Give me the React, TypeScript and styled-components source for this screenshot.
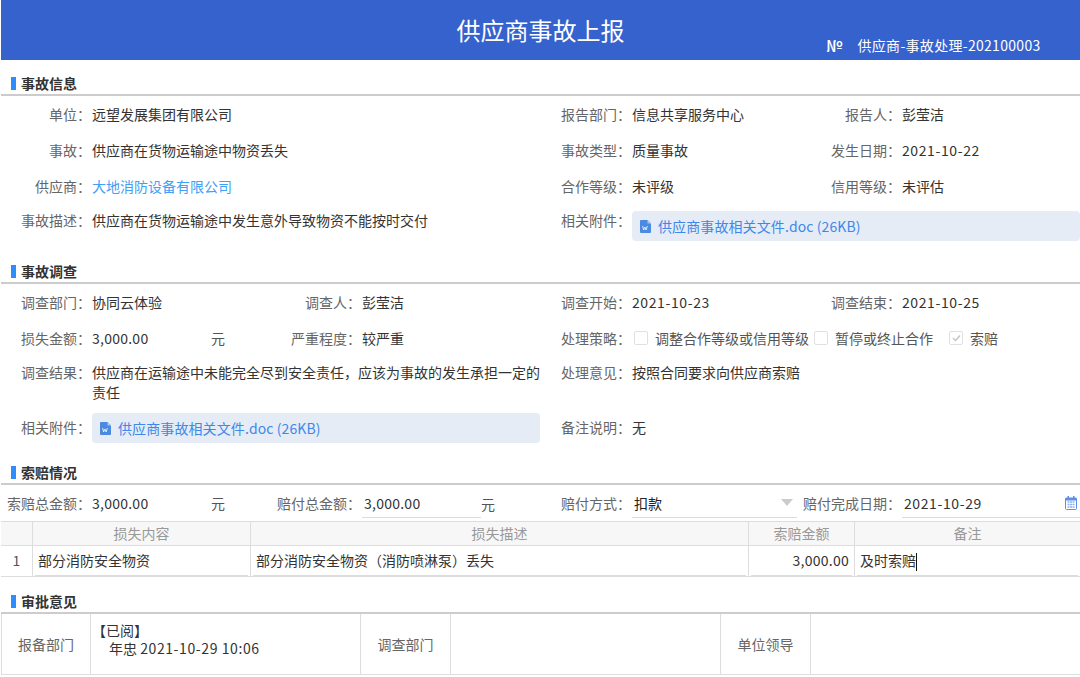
import type { ReactNode } from "react";
import styled, { createGlobalStyle } from "styled-components";

const GlobalStyle = createGlobalStyle`
  html, body {
    margin: 0;
    padding: 0;
    background: #fff;
  }
  body {
    font-family: "Noto Sans CJK SC", "Open Sans", sans-serif;
    font-size: 14px;
    color: #333;
    overflow: hidden;
  }
`;

const WordIcon = () => (
  <svg width="11" height="13" viewBox="0 0 11 13">
    <path d="M1 0h6.5L11 3.5V12a1 1 0 0 1-1 1H1a1 1 0 0 1-1-1V1a1 1 0 0 1 1-1z" fill="#4a8ae0" />
    <path d="M7.5 0L11 3.5H7.5z" fill="#a9c6f0" />
    <path d="M2.6 6l1 4 1.3-3 1.2 3 1.3-4" fill="none" stroke="#fff" strokeWidth="0.8" />
  </svg>
);

const CalendarIcon = () => (
  <svg width="12" height="14" viewBox="0 0 12 14">
    <rect x="0.5" y="2" width="11" height="11.5" rx="1" fill="#fff" stroke="#5b8fe8" />
    <rect x="0.5" y="2" width="11" height="2.5" fill="#5b8fe8" />
    <rect x="2.5" y="0" width="1.5" height="3" fill="#5b8fe8" />
    <rect x="8" y="0" width="1.5" height="3" fill="#5b8fe8" />
    <path d="M2.5 6h2M5 6h2M7.5 6h2M2.5 8.5h2M5 8.5h2M7.5 8.5h2M2.5 11h2M5 11h2M7.5 11h2" stroke="#8fb2ee" strokeWidth="1.4" />
  </svg>
);

const Attachment = () => (
  <FileBox>
    <WordIcon />
    <FileName>供应商事故相关文件.doc (26KB)</FileName>
  </FileBox>
);

const Field = ({ label, span, children }: { label: string; span?: number; children: ReactNode }) => (
  <>
    <Label>{label}：</Label>
    <Value $span={span}>{children}</Value>
  </>
);

const Check = ({ on, children }: { on?: boolean; children: string }) => (
  <CheckItem>
    <CheckBox>
      {on && (
        <svg width="9" height="8" viewBox="0 0 9 8">
          <path d="M1 4l2.5 2.5L8 1.5" fill="none" stroke="#c4c4c4" strokeWidth="1.4" />
        </svg>
      )}
    </CheckBox>
    {children}
  </CheckItem>
);

const App = () => {
  return (
    <Page>
      <GlobalStyle />
      <Header>
        <Title>供应商事故上报</Title>
        <SerialNo>
          <SerialMark>№</SerialMark>
          <span>供应商-事故处理-202100003</span>
        </SerialNo>
      </Header>

      <SectionTitle>事故信息</SectionTitle>
      <FormGrid>
        <Field label="单位" span={3}>远望发展集团有限公司</Field>
        <Field label="报告部门">信息共享服务中心</Field>
        <Field label="报告人">彭莹洁</Field>
        <Field label="事故" span={3}>供应商在货物运输途中物资丢失</Field>
        <Field label="事故类型">质量事故</Field>
        <Field label="发生日期"><Num>2021-10-22</Num></Field>
        <Field label="供应商" span={3}><LinkText>大地消防设备有限公司</LinkText></Field>
        <Field label="合作等级">未评级</Field>
        <Field label="信用等级">未评估</Field>
      </FormGrid>
      <WideRow $height={43}>
        <Label>事故描述：</Label>
        <Value>供应商在货物运输途中发生意外导致物资不能按时交付</Value>
        <Label>相关附件：</Label>
        <Attachment />
      </WideRow>

      <SectionTitle>事故调查</SectionTitle>
      <FormGrid>
        <Field label="调查部门">协同云体验</Field>
        <Field label="调查人">彭莹洁</Field>
        <Field label="调查开始"><Num>2021-10-23</Num></Field>
        <Field label="调查结束"><Num>2021-10-25</Num></Field>
        <Field label="损失金额">
          <Amount>
            <AmountText>3,000.00</AmountText>
            <Unit>元</Unit>
          </Amount>
        </Field>
        <Field label="严重程度">较严重</Field>
        <Label>处理策略：</Label>
        <ChecksCell>
          <Check>调整合作等级或信用等级</Check>
          <Check>暂停或终止合作</Check>
          <Check on>索赔</Check>
        </ChecksCell>
      </FormGrid>
      <WideRow $height={50}>
        <Label>调查结果：</Label>
        <Value>供应商在运输途中未能完全尽到安全责任，应该为事故的发生承担一定的责任</Value>
        <Label>处理意见：</Label>
        <Value>按照合同要求向供应商索赔</Value>
      </WideRow>
      <WideRow $height={42}>
        <CenterLabel>相关附件：</CenterLabel>
        <Attachment />
        <CenterLabel>备注说明：</CenterLabel>
        <CenterValue>无</CenterValue>
      </WideRow>

      <SectionTitle>索赔情况</SectionTitle>
      <ClaimGrid>
        <Label>索赔总金额：</Label>
        <Value>
          <Amount>
            <AmountText>3,000.00</AmountText>
            <Unit>元</Unit>
          </Amount>
        </Value>
        <Label>赔付总金额：</Label>
        <Amount>
          <AmountText $line>3,000.00</AmountText>
          <Unit>元</Unit>
        </Amount>
        <Label>赔付方式：</Label>
        <InputValue $gapRight={13}>
          <SelectText>扣款</SelectText>
          <SelectArrow />
        </InputValue>
        <Label>赔付完成日期：</Label>
        <InputValue>
          <Num>2021-10-29</Num>
          <CalendarSlot><CalendarIcon /></CalendarSlot>
        </InputValue>
      </ClaimGrid>

      <LossTable>
        <HeadRow>
          <HeadCell />
          <HeadCell>损失内容</HeadCell>
          <HeadCell>损失描述</HeadCell>
          <HeadCell>索赔金额</HeadCell>
          <HeadCell>备注</HeadCell>
        </HeadRow>
        <BodyRow>
          <IndexCell>1</IndexCell>
          <BodyCell><CellInput>部分消防安全物资</CellInput></BodyCell>
          <BodyCell><CellInput>部分消防安全物资（消防喷淋泵）丢失</CellInput></BodyCell>
          <BodyCell><CellInput $right>3,000.00</CellInput></BodyCell>
          <BodyCell><CellInput>及时索赔<Caret /></CellInput></BodyCell>
        </BodyRow>
      </LossTable>

      <SectionTitle>审批意见</SectionTitle>
      <ApprovalGrid>
        <ApprovalLabel>报备部门</ApprovalLabel>
        <ApprovalBody>
          <div>【已阅】</div>
          <Signature>年忠 <Num>2021-10-29 10:06</Num></Signature>
        </ApprovalBody>
        <ApprovalLabel>调查部门</ApprovalLabel>
        <ApprovalBody />
        <ApprovalLabel>单位领导</ApprovalLabel>
        <ApprovalBody />
      </ApprovalGrid>
    </Page>
  );
};

export default App;

// 스타일
const Page = styled.div`
  width: 1080px;
  height: 677px;
  overflow: hidden;
  box-sizing: border-box;
  padding-left: 1px;
  background: #fff;
`;

const Header = styled.header`
  position: relative;
  height: 60px;
  background: #3662ce;
  color: #fff;
  display: flex;
  justify-content: center;
  align-items: center;
`;

const Title = styled.h1`
  margin: 0;
  font-size: 24px;
  font-weight: 400;
  line-height: 60px;
`;

const SerialNo = styled.div`
  position: absolute;
  left: 825px;
  top: 35px;
  display: flex;
  align-items: center;
  gap: 15px;
  font-size: 14px;
  line-height: 20px;
  letter-spacing: 0.3px;
  white-space: nowrap;
`;

const SerialMark = styled.span`
  font-size: 16px;
  font-weight: 500;
  letter-spacing: 0;
`;

const SectionTitle = styled.h2`
  position: relative;
  margin: 0;
  height: 36px;
  box-sizing: border-box;
  padding: 14px 0 0 20px;
  font-size: 14px;
  line-height: 18px;
  font-weight: 700;
  color: #333;
  border-bottom: 2px solid #ccc;

  &::before {
    content: "";
    position: absolute;
    left: 10px;
    top: 17px;
    width: 5px;
    height: 13px;
    background: #2f8cff;
  }
`;

const FormGrid = styled.div`
  display: grid;
  grid-template-columns: 91px 179px 91px 178px 92px 178px 92px 178px;
  grid-auto-rows: 36px;
  align-items: center;
  margin-top: 1px;
`;

const WideRow = styled.div<{ $height: number }>`
  display: grid;
  grid-template-columns: 91px 448px 92px 448px;
  align-items: start;
  box-sizing: border-box;
  height: ${({ $height }) => $height}px;
  padding-top: 6px;
`;

const Label = styled.div`
  display: flex;
  justify-content: flex-end;
  padding-right: 1px;
  color: #666;
  line-height: 20px;
  white-space: nowrap;
  transform: translateY(-1px);
`;

const Value = styled.div<{ $span?: number }>`
  grid-column: span ${({ $span }) => $span ?? 1};
  color: #333;
  line-height: 20px;
  transform: translateY(-1px);
`;

const CenterLabel = styled(Label)`
  line-height: 30px;
`;

const CenterValue = styled(Value)`
  line-height: 30px;
`;

const LinkText = styled.span`
  color: #3fa0f5;
`;

const Num = styled.span`
  letter-spacing: 0.6px;
`;

const Amount = styled.div`
  display: flex;
  align-items: center;
`;

const AmountText = styled.span<{ $line?: boolean }>`
  box-sizing: border-box;
  width: 119px;
  letter-spacing: 0.25px;
  padding-left: ${({ $line }) => ($line ? "2px" : "0")};
  line-height: ${({ $line }) => ($line ? "26px" : "20px")};
  padding-bottom: ${({ $line }) => ($line ? "1px" : "0")};
  border-bottom: ${({ $line }) => ($line ? "1px solid #ddd" : "0")};
`;

const Unit = styled.span`
  color: #555;
`;

const FileBox = styled.div`
  display: flex;
  align-items: center;
  gap: 7px;
  height: 30px;
  box-sizing: border-box;
  padding-left: 8px;
  background: #e5ecf6;
  border-radius: 4px;
`;

const FileName = styled.span`
  color: #3d88ea;
  letter-spacing: 0.1px;
`;

const ChecksCell = styled.div`
  grid-column: span 3;
  display: flex;
  align-items: center;
  gap: 5px;
  padding-left: 2px;
  transform: translateY(-1px);
`;

const CheckItem = styled.label`
  display: flex;
  align-items: center;
  gap: 7px;
  color: #555;
  white-space: nowrap;

  &:nth-child(2) {
    margin-right: 11px;
  }
`;

const CheckBox = styled.span`
  display: flex;
  align-items: center;
  justify-content: center;
  width: 14px;
  height: 14px;
  box-sizing: border-box;
  border: 1.5px solid #dfdfe6;
  border-radius: 2px;
`;

const ClaimGrid = styled.div`
  display: grid;
  grid-template-columns: 91px 179px 91px 178px 92px 178px 92px 178px;
  grid-template-rows: 28px;
  align-items: center;
  box-sizing: border-box;
  height: 36px;
  padding-top: 5px;
`;

const InputValue = styled.div<{ $gapRight?: number }>`
  display: flex;
  align-items: center;
  justify-content: space-between;
  box-sizing: border-box;
  height: 28px;
  padding: 0 0 2px 2px;
  margin-right: ${({ $gapRight }) => $gapRight ?? 0}px;
  border-bottom: 1px solid #ddd;
  color: #333;
`;

const SelectText = styled.span`
  color: #222;
`;

const SelectArrow = styled.span`
  width: 0;
  height: 0;
  margin-right: 4px;
  border-left: 6px solid transparent;
  border-right: 6px solid transparent;
  border-top: 7px solid #ccc;
`;

const CalendarSlot = styled.span`
  display: flex;
  margin-right: 3px;
`;

const LossTable = styled.div`
  border-top: 1px solid #ddd;
  margin-bottom: 1px;
`;

const HeadRow = styled.div`
  display: grid;
  grid-template-columns: 32px 218px 498px 106px 1fr;
  height: 23px;
`;

const BodyRow = styled.div`
  display: grid;
  grid-template-columns: 32px 218px 498px 106px 1fr;
  height: 32px;
`;

const HeadCell = styled.div`
  box-sizing: border-box;
  text-align: center;
  line-height: 23px;
  background: #f7f7f7;
  border-right: 1px solid #ddd;
  border-bottom: 1px solid #ddd;
  color: #999;

  &:last-child {
    border-right: 0;
  }
`;

const IndexCell = styled.div`
  box-sizing: border-box;
  text-align: center;
  line-height: 31px;
  color: #555;
  border-right: 1px solid #ddd;
  border-bottom: 1px solid #ddd;
`;

const BodyCell = styled.div`
  box-sizing: border-box;
  padding: 0 2px;
  border-right: 1px solid #ddd;
  border-bottom: 1px solid #ddd;

  &:last-child {
    border-right: 0;
  }
`;

const CellInput = styled.div<{ $right?: boolean }>`
  box-sizing: border-box;
  height: 31px;
  line-height: 31px;
  padding: 0 3px;
  text-align: ${({ $right }) => ($right ? "right" : "left")};
  letter-spacing: ${({ $right }) => ($right ? "0.25px" : "0")};
  border-bottom: 1px solid #ddd;
`;

const Caret = styled.span`
  display: inline-block;
  width: 1px;
  height: 18px;
  vertical-align: middle;
  background: #111;
`;

const ApprovalGrid = styled.div`
  display: grid;
  grid-template-columns: 89px 270px 90px 270px 90px 1fr;
  box-sizing: border-box;
  height: 61px;
  border-bottom: 1px solid #ddd;
`;

const ApprovalLabel = styled.div`
  display: flex;
  align-items: center;
  justify-content: center;
  color: #666;
  border-left: 1px solid #ddd;
`;

const ApprovalBody = styled.div`
  padding: 7px 0 0 1px;
  line-height: 18px;
  color: #333;
  border-left: 1px solid #ddd;
`;

const Signature = styled.div`
  padding-left: 17px;
`;
